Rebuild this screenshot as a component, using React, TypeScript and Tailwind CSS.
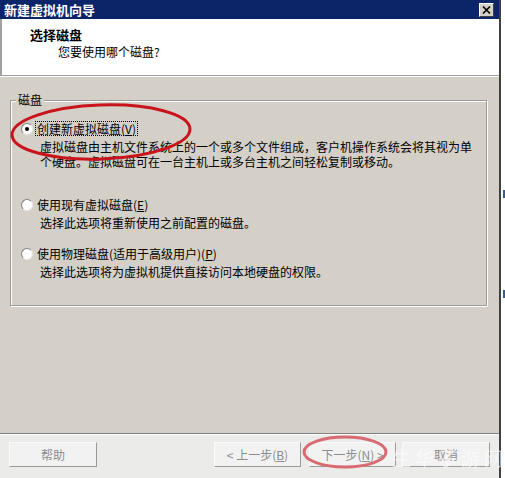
import React from 'react';

const font = { fontFamily: '"Noto Sans CJK SC", "Liberation Sans", sans-serif' };

const Radio: React.FC<{ checked?: boolean }> = ({ checked }) => (
  <span className="relative inline-block w-[12px] h-[12px] rounded-full bg-white border border-[#808080] border-r-[#e8e8e8] border-b-[#e8e8e8] shrink-0">
    {checked && <span className="absolute left-[3px] top-[3px] w-[4px] h-[4px] rounded-full bg-black" />}
  </span>
);

const Button: React.FC<{ children: React.ReactNode; className?: string }> = ({ children, className }) => (
  <div
    className={`h-[25px] flex items-center justify-center bg-[#f2f2f2] border border-[#fafafa] border-r-[#9a9a9a] border-b-[#9a9a9a] text-[12px] text-[#8c8c8c] ${className ?? ''}`}
  >
    {children}
  </div>
);

const Option: React.FC<{
  label: React.ReactNode;
  desc: React.ReactNode;
  checked?: boolean;
  focus?: boolean;
  className?: string;
}> = ({ label, desc, checked, focus, className }) => (
  <div className={`flex flex-col ${className ?? ''}`}>
    <div className="flex items-center h-[15px]">
      <Radio checked={checked} />
      <span
        className={`ml-[3px] leading-[13px] px-[1px] ${focus ? 'outline outline-1 outline-dotted outline-black' : ''}`}
      >
        {label}
      </span>
    </div>
    <div className="pl-[19px] mt-[3px] leading-[15px] text-black">{desc}</div>
  </div>
);

export default function App() {
  return (
    <div className="relative w-[505px] h-[478px] bg-white overflow-hidden text-[12px] text-black" style={font}>
      <div className="w-[501px] h-full flex flex-col bg-[#d4d0c8] border-r-2 border-[#404040]">
        {/* title bar */}
        <div className="h-[19px] bg-[#0c2468] flex items-center justify-between pl-[4px] pr-[5px]">
          <span className="text-white font-bold text-[13px] leading-[19px]">新建虚拟机向导</span>
          <div className="w-[15px] h-[14px] bg-[#d4d0c8] border border-white border-r-[#404040] border-b-[#404040] flex items-center justify-center">
            <svg width="9" height="8" viewBox="0 0 9 8">
              <path d="M1 0.5 L8 7.5 M8 0.5 L1 7.5" stroke="#000" strokeWidth="1.6" />
            </svg>
          </div>
        </div>

        {/* header */}
        <div className="h-[57px] bg-white border-l-2 border-[#a0a0a0] border-b border-b-[#a0a0a0] pt-[8px]">
          <div className="pl-[28px] font-bold text-[13px] leading-[16px]">选择磁盘</div>
          <div className="pl-[56px] mt-[2px] leading-[14px]">您要使用哪个磁盘?</div>
        </div>
        <div className="h-px bg-white" />

        {/* body */}
        <div className="flex-1 flex flex-col pt-[23px] pl-[10px] pr-[12px]">
          <div className="relative h-[206px] border border-[#9a9a9a] shadow-[1px_1px_0_#ffffff,inset_1px_1px_0_#ffffff] pl-[10px] pt-[20px]">
            <span className="absolute left-[5px] top-[-8px] bg-[#d4d0c8] px-[2px] leading-[14px]">磁盘</span>
            <Option
              checked
              focus
              label={<>创建新虚拟磁盘(<u>V</u>)</>}
              desc={
                <>
                  虚拟磁盘由主机文件系统上的一个或多个文件组成，客户机操作系统会将其视为单
                  <br />
                  个硬盘。虚拟磁盘可在一台主机上或多台主机之间轻松复制或移动。
                </>
              }
            />
            <Option
              className="mt-[28px]"
              label={<>使用现有虚拟磁盘(<u>E</u>)</>}
              desc="选择此选项将重新使用之前配置的磁盘。"
            />
            <Option
              className="mt-[16px]"
              label={<>使用物理磁盘(适用于高级用户)(<u>P</u>)</>}
              desc="选择此选项将为虚拟机提供直接访问本地硬盘的权限。"
            />
          </div>
        </div>

        {/* footer */}
        <div className="h-px bg-[#808080]" />
        <div className="h-px bg-white" />
        <div className="h-[43px] bg-[#ebebea] flex items-start pt-[7px] pl-[9px]">
          <Button className="w-[88px]">帮助</Button>
          <Button className="w-[87px] ml-[117px]">&lt; 上一步(<u>B</u>)</Button>
          <Button className="w-[87px] ml-[8px] border-[#9a9a9a]">下一步(<u>N</u>) &gt;</Button>
          <Button className="w-[88px] ml-[6px]">取消</Button>
        </div>
      </div>

      {/* right-side bits of window behind */}
      <div className="absolute left-[503px] top-[190px] w-[2px] h-[8px] bg-[#3d5a8a]" />
      <div className="absolute left-[503px] top-[290px] w-[2px] h-[8px] bg-[#3d5a8a]" />

      {/* watermark */}
      <div className="absolute left-[392px] top-[446px] whitespace-nowrap text-[19px] tracking-[4px] text-white/60 leading-[24px] pointer-events-none">
        生华子游网
      </div>

      {/* red annotation ellipses */}
      <svg className="absolute left-0 top-0 pointer-events-none" width="505" height="478">
        <ellipse cx="101" cy="132" rx="89" ry="27" fill="none" stroke="#c8141a" strokeWidth="3" transform="rotate(-2 101 132)" />
        <ellipse cx="345" cy="452" rx="41" ry="15" fill="none" stroke="#d86a72" strokeWidth="3" />
      </svg>
    </div>
  );
}
